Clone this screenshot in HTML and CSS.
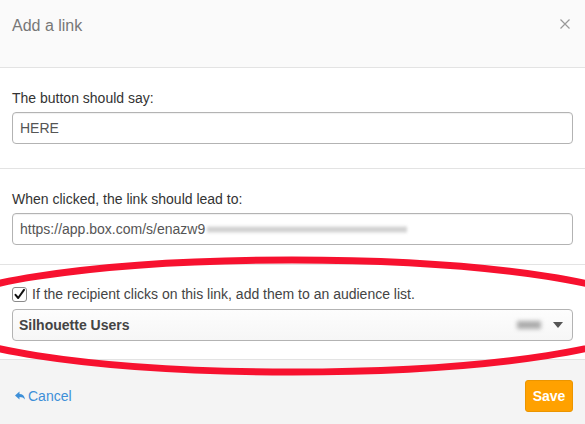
FILE: index.html
```html
<!DOCTYPE html>
<html>
<head>
<meta charset="utf-8">
<link rel="stylesheet" href="styles.css">
</head>
<body>
<div class="modal">
  <div class="header">
    <div class="title">Add a link</div>
    <svg class="close" width="10" height="10" viewBox="0 0 10 10"><path d="M0.5 0.5L9.5 9.5M9.5 0.5L0.5 9.5" stroke="#999" stroke-width="1.2" fill="none"/></svg>
  </div>
  <div class="section s1">
    <div class="label">The button should say:</div>
    <div class="input">HERE</div>
  </div>
  <div class="section s2">
    <div class="label">When clicked, the link should lead to:</div>
    <div class="input">https://app.box.com/s/enazw9<span class="blur"></span></div>
  </div>
  <div class="section s3">
    <div class="check-row">
      <span class="checkbox"><svg width="13" height="13" viewBox="0 0 13 13"><path d="M2.5 6.8L5.2 10L11 1.8" stroke="#111" stroke-width="2" fill="none" stroke-linecap="round" stroke-linejoin="round"/></svg></span>
      <span class="label">If the recipient clicks on this link, add them to an audience list.</span>
    </div>
    <div class="select">
      <span class="sel-text">Silhouette Users</span>
      <span class="sel-blur"></span>
      <span class="caret"></span>
    </div>
  </div>
  <div class="footer">
    <a class="cancel"><svg width="10" height="9" viewBox="0 0 10 9"><path d="M0 4.5L4.5 0.5V3C7.5 3 9.5 4.8 10 8.5C8.8 6.6 7 5.9 4.5 5.9V8.5Z" fill="#3d8fd8"/></svg>Cancel</a>
    <button class="save">Save</button>
  </div>
  <svg class="ring" width="585" height="424" viewBox="0 0 585 424"><ellipse cx="292" cy="316" rx="361" ry="56" fill="none" stroke="#f7112f" stroke-width="7"/></svg>
</div>
</body>
</html>
```

FILE: styles.css
```css
* { box-sizing: border-box; }
html, body { margin: 0; padding: 0; }
body {
  font-family: "Liberation Sans", Arial, sans-serif;
  font-size: 14px;
  color: #333;
  background: #fff;
}
.modal {
  position: relative;
  width: 585px;
  height: 424px;
  overflow: hidden;
  background: #fff;
}
.header {
  height: 68px;
  background: #fafafa;
  border-bottom: 1px solid #e3e3e3;
  display: flex;
  align-items: flex-start;
  justify-content: space-between;
  padding: 16px 15px 0 12px;
}
.title {
  font-size: 16px;
  line-height: 20px;
  color: #777;
}
.close { margin-top: 3px; }
.section {
  padding: 20px 12px 24px;
  border-bottom: 1px solid #e3e3e3;
}
.s2 { padding-bottom: 19px; }
.s3 { padding: 19px 12px 18px; }
.label {
  line-height: 20px;
  color: #333;
}
.input {
  margin-top: 4px;
  height: 32px;
  border: 1px solid #b3b3b3;
  border-radius: 4px;
  box-shadow: inset 0 1px 1px rgba(0,0,0,0.06);
  padding: 0 7px;
  line-height: 30px;
  color: #555;
  display: flex;
  align-items: center;
}
.blur {
  display: inline-block;
  width: 200px;
  height: 7px;
  margin-left: 2px;
  background: linear-gradient(#e2e2e2, #bdbdbd 50%, #e2e2e2);
  filter: blur(1.5px);
  opacity: 0.8;
}
.check-row {
  display: flex;
  align-items: center;
  height: 20px;
}
.check-row .label { color: #444; margin-left: 5px; }
.checkbox {
  width: 15px;
  height: 15px;
  border: 1px solid #8a8a8a;
  border-radius: 3px;
  background: #fff;
  display: flex;
  align-items: center;
  justify-content: center;
}
.select {
  margin-top: 5px;
  height: 32px;
  border: 1px solid #b3b3b3;
  border-radius: 4px;
  background: linear-gradient(#fdfdfd, #f6f6f6);
  display: flex;
  align-items: center;
  padding: 0 9px 0 6px;
}
.sel-text {
  font-weight: bold;
  color: #444;
  flex: 1;
}
.sel-blur {
  width: 24px;
  height: 8px;
  background: #999;
  filter: blur(2px);
  margin-right: 12px;
  opacity: 0.8;
}
.caret {
  width: 0;
  height: 0;
  border-left: 5px solid transparent;
  border-right: 5px solid transparent;
  border-top: 6px solid #555;
}
.footer {
  height: 65px;
  background: #f4f4f4;
  display: flex;
  align-items: center;
  justify-content: space-between;
  padding: 7px 12px 0 15px;
}
.cancel {
  color: #3d8fd8;
  display: flex;
  align-items: center;
  gap: 3px;
  font-size: 14px;
  margin-top: -1px;
}
.save {
  height: 32px;
  padding: 0 6px;
  background: #ffa100;
  border: 1px solid #eb9500;
  border-radius: 3px;
  color: #fff;
  font-family: "Liberation Sans", Arial, sans-serif;
  font-weight: bold;
  font-size: 14px;
  width: 48px;
}
.ring {
  position: absolute;
  left: 0;
  top: 0;
  pointer-events: none;
}
```
